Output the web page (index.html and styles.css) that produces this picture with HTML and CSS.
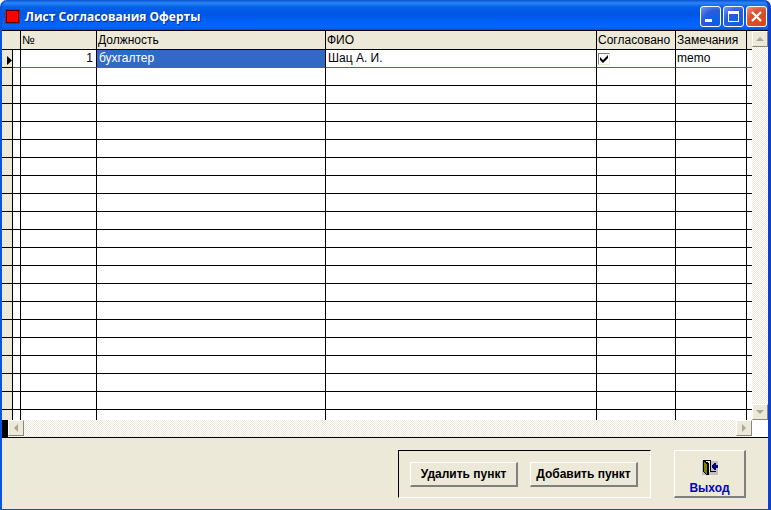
FILE: index.html
```
<!DOCTYPE html>
<html lang="ru">
<head>
    <meta charset="UTF-8">
    <meta name="viewport" content="width=device-width, initial-scale=1.0">
    <title>Лист Согласования Оферты</title>
    <link rel="stylesheet" href="styles.css">
</head>
<body>
    <div class="window">
        <header class="titlebar">
            <span class="app-icon"></span>
            <h1>Лист Согласования Оферты</h1>
            <div class="window-buttons">
                <button type="button" class="win-btn" aria-label="Свернуть">
                    <svg width="19" height="19" viewBox="0 0 19 19"><path d="M4 12h7v3H4z" fill="#fff"/></svg>
                </button>
                <button type="button" class="win-btn" aria-label="Развернуть">
                    <svg width="19" height="19" viewBox="0 0 19 19"><path d="M4 4h11v11H4zM5 7v7h9V7z" fill="#fff" fill-rule="evenodd"/></svg>
                </button>
                <button type="button" class="win-btn win-close" aria-label="Закрыть">
                    <svg width="19" height="19" viewBox="0 0 19 19"><path d="M5 5l9 9M14 5l-9 9" stroke="#fff" stroke-width="2.2"/></svg>
                </button>
            </div>
        </header>

        <main class="client">
            <div class="browse">
                <div class="grid-view">
                    <table class="grid">
                        <colgroup>
                            <col class="col-marker">
                            <col class="col-delete">
                            <col class="col-num">
                            <col class="col-post">
                            <col class="col-name">
                            <col class="col-agreed">
                            <col class="col-notes">
                            <col class="col-rest">
                        </colgroup>
                        <thead>
                            <tr>
                                <th colspan="2"></th>
                                <th>№</th>
                                <th>Должность</th>
                                <th>ФИО</th>
                                <th>Согласовано</th>
                                <th>Замечания</th>
                                <th></th>
                            </tr>
                        </thead>
                        <tbody id="rows">
                            <tr class="current">
                                <td><svg class="marker" width="5" height="9" viewBox="0 0 5 9"><path d="M0 0l5 4.500L0 9z"/></svg></td>
                                <td></td>
                                <td class="num">1</td>
                                <td class="selected">бухгалтер</td>
                                <td>Шац А. И.</td>
                                <td class="check"><input type="checkbox" aria-label="Согласовано" checked></td>
                                <td class="memo">memo</td>
                                <td></td>
                            </tr>
                        </tbody>
                    </table>
                </div>
                <div class="scroll scroll-v">
                    <button type="button" class="scroll-btn" aria-label="Вверх">
                        <svg width="8" height="4" viewBox="0 0 8 4"><path d="M0 4L4 0L8 4z"/></svg>
                    </button>
                    <button type="button" class="scroll-btn" aria-label="Вниз">
                        <svg width="8" height="4" viewBox="0 0 8 4"><path d="M0 0L4 4L8 0z"/></svg>
                    </button>
                </div>
                <div class="scroll-row">
                    <div class="scroll scroll-h">
                        <button type="button" class="scroll-btn" aria-label="Влево">
                            <svg width="4" height="8" viewBox="0 0 4 8"><path d="M4 0L0 4L4 8z"/></svg>
                        </button>
                        <button type="button" class="scroll-btn" aria-label="Вправо">
                            <svg width="4" height="8" viewBox="0 0 4 8"><path d="M0 0L4 4L0 8z"/></svg>
                        </button>
                    </div>
                </div>
                <div class="corner"></div>
            </div>

            <footer class="toolbar">
                <div class="group">
                    <button type="button" class="btn">Удалить пункт</button>
                    <button type="button" class="btn">Добавить пункт</button>
                </div>
                <button type="button" class="btn btn-exit">
                    <svg width="16" height="16" viewBox="0 0 16 16" shape-rendering="crispEdges">
                        <path d="M0 1h16v14H0z" fill="#c0c0c0"/>
                        <path d="M2 1h6v11H2z" fill="#ece9d8"/>
                        <path d="M1 0h8v11h5v1H8V1H1z"/>
                        <path d="M1 0l6 3v12H5l-4-3z"/>
                        <path d="M2 2l3 2v10l-3-2z" fill="#808000"/>
                        <path d="M10 5h1V4h1V3h2v2h2v3h-2v2h-2V9h-1V8h-1z" fill="#000080"/>
                    </svg>
                    Выход
                </button>
            </footer>
        </main>
    </div>

    <script>
        // пустые строки таблицы
        const rows = document.getElementById('rows');
        for (let i = 0; i < 60; i++) {
            const row = document.createElement('tr');
            row.innerHTML = '<td></td>'.repeat(8);
            rows.appendChild(row);
        }
    </script>
</body>
</html>
```
FILE: styles.css
```
* {
    box-sizing: border-box;
}

body {
    margin: 0;
    background-color: #fff;
    color: #000;
    font-family: "Liberation Sans", Arial, sans-serif;
    font-size: 12px;
}

button {
    padding: 0;
    font-family: inherit;
}

.window {
    display: flex;
    flex-direction: column;
    height: 100vh;
    border: solid;
    border-width: 0 3px 1px 2px;
    border-color: #0a3fd0 #0a3fd0 #1c48b8 #0855dd;
    border-radius: 7px 7px 0 0;
    background-color: #0855dd;
}

/* Заголовок окна */
.titlebar {
    display: flex;
    align-items: center;
    flex: none;
    height: 30px;
    padding: 3px 0 0 3px;
    border-radius: 7px 7px 0 0;
    background: linear-gradient(#0a50d0 0, #2a86f8 3px, #0560e8 7px, #0055e5 14px, #0262fa 22px, #0066ff 27px, #0050d8 30px);
}

.app-icon {
    width: 15px;
    height: 15px;
    margin-right: 5px;
    border: 1px solid #b01030;
    outline: 1px solid #500000;
    outline-offset: -2px;
    background-color: #f00;
}

h1 {
    flex: 1;
    margin: 0;
    color: #fff;
    font-family: "Open Sans", "Noto Sans", sans-serif;
    font-size: 12px;
    font-weight: bold;
    line-height: 16px;
    text-shadow: 1px 1px #0a2a8c;
    white-space: nowrap;
}

.window-buttons {
    display: flex;
    gap: 2px;
    padding-right: 1px;
}

.win-btn {
    width: 21px;
    height: 21px;
    border: 1px solid #fff;
    border-radius: 3px;
    background: radial-gradient(circle at 80% 90%, #0a5cf0, #2a5cdc 60%, #7a9cf0);
}

.win-btn svg {
    display: block;
}

.win-close {
    background: radial-gradient(circle at 80% 90%, #d84818, #dc5030 60%, #f09880);
}

/* Таблица */
.client {
    display: flex;
    flex: 1;
    flex-direction: column;
    min-height: 0;
    border-top: 1px solid #000;
    background-color: #ece9d8;
}

.browse {
    display: grid;
    flex: 1;
    grid-template-columns: 1fr 16px;
    grid-template-rows: 1fr 17px;
    min-height: 0;
    border-bottom: 1px solid #000;
}

.grid-view {
    overflow: hidden;
    background-color: #fff;
}

.grid {
    width: 100%;
    table-layout: fixed;
    border-spacing: 0;
}

.col-marker { width: 11px; }
.col-delete { width: 8px; }
.col-num { width: 76px; }
.col-post { width: 229px; }
.col-agreed { width: 79px; }
.col-notes { width: 71px; }
.col-rest { width: 5px; }

.grid th,
.grid td {
    height: 18px;
    padding: 0 1px;
    border: solid #000;
    border-width: 0 1px 1px 0;
    line-height: 17px;
    text-align: left;
    white-space: nowrap;
}

.grid th {
    height: 19px;
    padding-top: 1px;
    background-color: #ece9d8;
    font-weight: normal;
}

.grid td {
    padding-left: 2px;
}

.grid th:last-child,
.grid td:last-child {
    padding: 0;
    border-right: 0;
}

.grid td:first-child {
    padding: 0 0 0 5px;
    background-color: #ece9d8;
}

.grid td:nth-child(2) {
    padding: 0;
}

.grid .current td {
    border-bottom-color: #316ac5;
}

.grid .current td:first-child {
    border-bottom-color: #000;
}

.marker {
    display: block;
    margin-top: 3px;
}

.grid .num {
    padding-right: 3px;
    text-align: right;
}

.grid .selected {
    background-color: #316ac5;
    color: #fff;
}

.grid .check {
    padding: 0 1px;
}

.grid .memo {
    padding-left: 1px;
}

.check input {
    display: block;
    width: 12px;
    height: 12px;
    margin: 0;
    appearance: none;
    border: 1px solid;
    border-color: #808080 #ece9d8 #ece9d8 #808080;
    background-color: #fff;
}

.check input:checked {
    background-image: url("data:image/svg+xml,%3Csvg xmlns='http://www.w3.org/2000/svg' viewBox='0 0 10 10'%3E%3Cpath d='M1 3l3 3L9 1v3L4 9 1 6z'/%3E%3C/svg%3E");
}

/* Полосы прокрутки */
.scroll {
    display: flex;
    justify-content: space-between;
    background: repeating-conic-gradient(#fff 0 25%, #ece9d8 0 50%) 0 0 / 2px 2px;
}

.scroll-v {
    flex-direction: column;
}

.scroll-row {
    padding-left: 6px;
    background-color: #000;
}

.scroll-h {
    height: 100%;
}

.scroll-btn {
    display: flex;
    align-items: center;
    justify-content: center;
    width: 16px;
    height: 16px;
    border: 1px solid;
    border-color: #fff #8a8778 #8a8778 #fff;
    background-color: #ece9d8;
}

.scroll-btn svg {
    fill: #aca899;
}

.corner {
    background-color: #fff;
}

/* Нижняя панель */
.toolbar {
    display: flex;
    flex: none;
    justify-content: flex-end;
    gap: 23px;
    padding: 12px 22px 11px;
}

.group {
    display: flex;
    gap: 12px;
    align-items: center;
    padding: 0 12px 0 11px;
    border: 1px solid;
    border-color: #000 #fff #fff #000;
}

.btn {
    width: 108px;
    height: 25px;
    border: solid;
    border-width: 1px 2px 2px 1px;
    border-color: #fff #808080 #808080 #fff;
    background-color: #ece9d8;
    color: #000;
    font-size: 12px;
    font-weight: bold;
    line-height: 16px;
    white-space: nowrap;
}

.btn-exit {
    display: flex;
    flex-direction: column;
    gap: 4px;
    align-items: center;
    justify-content: flex-end;
    width: 72px;
    height: 48px;
    color: #0000d0;
}
```
